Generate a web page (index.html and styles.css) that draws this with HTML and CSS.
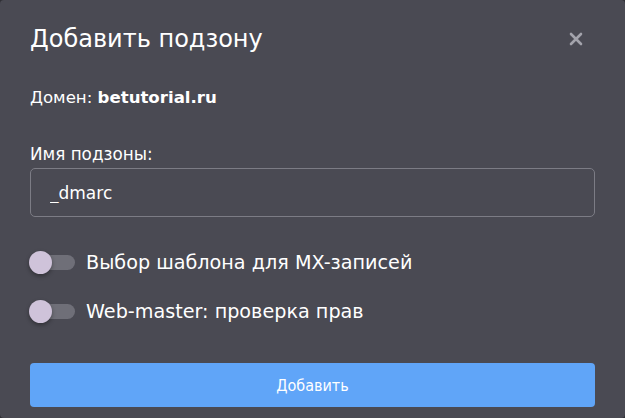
FILE: index.html
```html
<!DOCTYPE html>
<html lang="ru">

<head>
    <meta charset="UTF-8">
    <meta name="viewport" content="width=device-width, initial-scale=1.0">
    <title>Добавить подзону</title>
    <link rel="stylesheet" href="styles.css">
</head>

<body>
    <div class="modal">
        <div class="modal-head">
            <h2 class="modal-title">Добавить подзону</h2>
            <button class="btn-close" type="button">
                <svg width="14" height="14" viewBox="0 0 14 14">
                    <path d="M2 2 L12 12 M12 2 L2 12" stroke="#a3a3ab" stroke-width="2.6" stroke-linecap="round" />
                </svg>
            </button>
        </div>

        <p class="domain">Домен: <b>betutorial.ru</b></p>

        <label class="field-label" for="name">Имя подзоны:</label>
        <input class="field" type="text" id="name" value="_dmarc">

        <div class="switches">
            <label class="switch">
                <span class="track"><span class="knob"></span></span>
                <span class="switch-text">Выбор шаблона для MX-записей</span>
            </label>
            <label class="switch">
                <span class="track"><span class="knob"></span></span>
                <span class="switch-text">Web-master: проверка прав</span>
            </label>
        </div>

        <button class="btn-submit" type="submit">Добавить</button>
    </div>
</body>

</html>
```

FILE: styles.css
```css
html,
body {
    margin: 0;
    height: 100%;
    background: #2f2f35;
}

.modal {
    box-sizing: border-box;
    height: 418px;
    background: #4a4a53;
    border-radius: 4px;
    padding: 0 30px;
    font-family: "DejaVu Sans", sans-serif;
    color: #ffffff;
    display: flex;
    flex-direction: column;
}

.modal-head {
    display: flex;
    justify-content: space-between;
    align-items: center;
    height: 78px;
}

.modal-title {
    margin: 0;
    font-size: 24px;
    font-weight: 400;
}

.btn-close {
    background: none;
    border: 0;
    padding: 0;
    margin-right: 12px;
    cursor: pointer;
    display: flex;
}

.domain {
    margin: 10px 0 0;
    font-size: 16.6px;
    line-height: 20px;
}

.domain b {
    font-weight: 700;
}

.field-label {
    margin-top: 36px;
    font-size: 16.8px;
    line-height: 20px;
}

.field {
    box-sizing: border-box;
    margin-top: 4px;
    width: 100%;
    height: 49px;
    padding: 0 19px;
    background: transparent;
    border: 1px solid #7c7c85;
    border-radius: 5px;
    color: #ffffff;
    font-family: "DejaVu Sans", sans-serif;
    font-size: 17px;
    outline: none;
}

.switches {
    display: flex;
    flex-direction: column;
    gap: 26px;
    margin-top: 34px;
}

.switch {
    display: flex;
    align-items: center;
    gap: 11px;
    height: 23px;
    cursor: pointer;
}

.track {
    position: relative;
    width: 45px;
    height: 15px;
    border-radius: 8px;
    background: #6f6f78;
}

.knob {
    position: absolute;
    left: -1px;
    top: -4px;
    width: 23px;
    height: 23px;
    border-radius: 50%;
    background: #cfc3da;
    box-shadow: 0 2px 4px rgba(0, 0, 0, 0.35);
}

.switch-text {
    font-size: 19.2px;
    line-height: 23px;
}

.btn-submit {
    margin-top: 40px;
    height: 44px;
    width: 100%;
    border: 0;
    border-radius: 4px;
    background: #60a5f8;
    color: #ffffff;
    font-family: "DejaVu Sans Condensed", "DejaVu Sans", sans-serif;
    font-size: 16px;
    cursor: pointer;
}
```
